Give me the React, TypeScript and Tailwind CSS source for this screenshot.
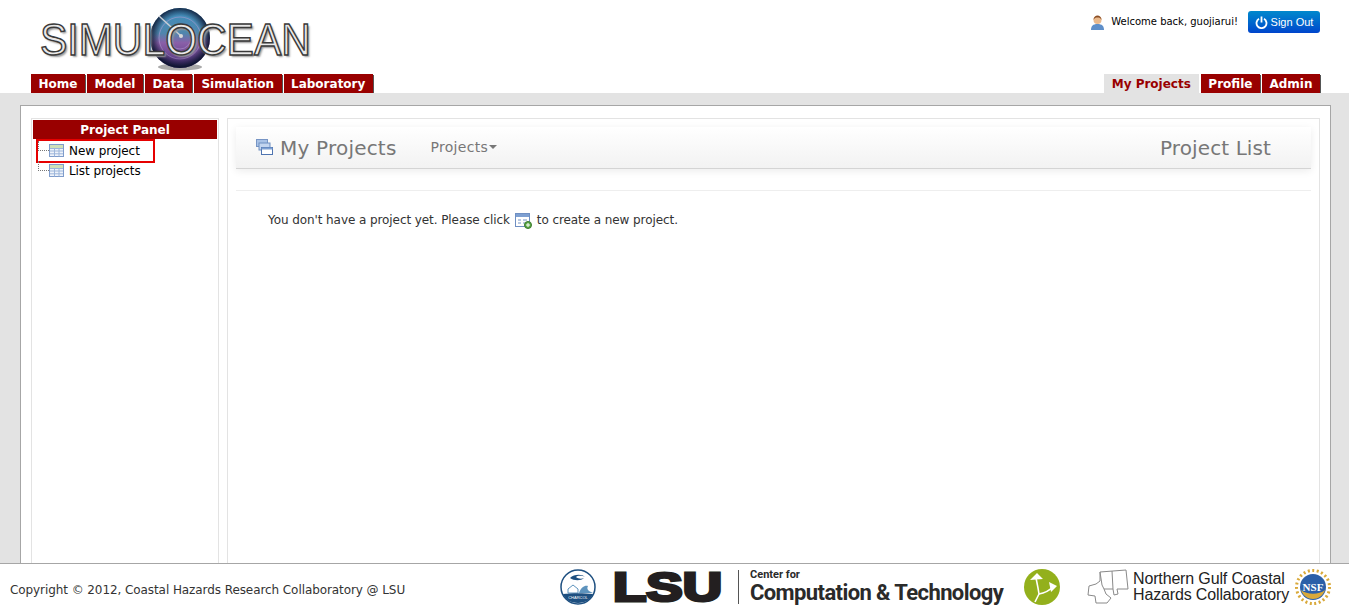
import React from "react";

const dejavu = "font-['DejaVu_Sans',Verdana,sans-serif]";

const Tab = ({ label, active }: { label: string; active?: boolean }) => (
  <a
    className={
      active
        ? "h-[19px] px-[8px] bg-[#e3e3e3] text-[#990000] text-[12px] font-bold leading-[20px]"
        : "h-[19px] px-[7.5px] bg-[#990000] text-white text-[12px] font-bold leading-[20px] shadow-[1px_1px_0_#555]"
    }
  >
    {label}
  </a>
);

const TableIcon = () => (
  <svg width="15" height="14" viewBox="0 0 15 14" className="shrink-0">
    <rect x="0.5" y="0.5" width="14" height="12" fill="#eef3fa" stroke="#7f9ccb" />
    <rect x="1" y="1" width="13" height="3" fill="#cfe0b8" />
    <path d="M1 4.500h13M1 7h13M1 9.800h13M5.500 4v8.500M10 4v8.500" stroke="#9db6da" strokeWidth="1" fill="none" />
  </svg>
);

const TreeRow = ({ label, boxed }: { label: string; boxed?: boolean }) => (
  <div className="relative flex items-center h-[20px] pl-[16px] text-[12px] tracking-[-0.08px] text-black">
    <span className="absolute left-[5px] top-0 h-[10px] w-[11px] border-l border-b border-dotted border-[#777]" />
    <span className="mr-[5px]">
      <TableIcon />
    </span>
    {label}
    {boxed && <span className="absolute left-[3px] top-[-2px] w-[119px] h-[24px] border-2 border-[#e60000]" />}
  </div>
);

const Sphere = () => (
  <svg width="86" height="68" viewBox="0 0 86 68" className="absolute left-[106px] top-[4px]">
    <defs>
      <linearGradient id="body" x1="0" y1="0" x2="0" y2="1">
        <stop offset="0%" stopColor="#3f8fbd" />
        <stop offset="42%" stopColor="#4f86ad" />
        <stop offset="58%" stopColor="#8a5fa8" />
        <stop offset="100%" stopColor="#4b2f78" />
      </linearGradient>
      <radialGradient id="rim" cx="50%" cy="48%" r="50%">
        <stop offset="70%" stopColor="#0d1530" stopOpacity="0" />
        <stop offset="100%" stopColor="#0d1530" stopOpacity="0.95" />
      </radialGradient>
    </defs>
    <ellipse cx="43" cy="63" rx="22" ry="3.500" fill="#555" opacity="0.5" />
    <circle cx="43" cy="34" r="30" fill="url(#body)" />
    <circle cx="43" cy="34" r="21" fill="none" stroke="#b59ad0" strokeWidth="0.8" opacity="0.7" />
    <circle cx="43" cy="34" r="11" fill="none" stroke="#b59ad0" strokeWidth="0.8" opacity="0.7" />
    <circle cx="43" cy="34" r="30" fill="url(#rim)" />
    <path d="M22 12 L44 32" stroke="#c9ced6" strokeWidth="1.500" />
    <circle cx="44" cy="32" r="2" fill="#d8d8d8" />
  </svg>
);

const StackIcon = () => (
  <svg width="17" height="17" viewBox="0 0 17 17" className="shrink-0">
    <rect x="0.500" y="0.500" width="11" height="7" fill="#a9c2e6" stroke="#7795c5" />
    <rect x="3" y="4" width="11" height="7" fill="#c3d5ef" stroke="#6f8fc2" />
    <rect x="5.500" y="8.500" width="11" height="7" fill="#fff" stroke="#4f74b0" />
    <rect x="5.500" y="8.500" width="11" height="2" fill="#7ea0d2" />
  </svg>
);

const NewIcon = () => (
  <svg width="17" height="17" viewBox="0 0 17 17" className="inline-block align-[-5px] mx-[5px]">
    <rect x="0.500" y="1.500" width="14" height="13" fill="#fff" stroke="#6f8fc2" />
    <rect x="1" y="2" width="13" height="3" fill="#7ea0d2" />
    <path d="M3 8h3M8 8h4M3 11h3M8 11h2" stroke="#7795c5" />
    <circle cx="13" cy="13" r="3.500" fill="#5aa845" stroke="#3c7a2e" />
    <path d="M13 11v4M11 13h4" stroke="#fff" />
  </svg>
);

const Charcoal = () => (
  <svg width="36" height="36" viewBox="0 0 36 36" className="shrink-0">
    <circle cx="18" cy="18" r="17" fill="#fff" stroke="#1d4f80" strokeWidth="1.500" />
    <path d="M10 9c4-4 12-4 15-1-4-2-8-1-9 0 2 2 6 2 8 1-3 3-10 3-14 0z" fill="#1d4f80" />
    <path d="M8 20l5-4 5 4v4H8z" fill="none" stroke="#5d93bd" />
    <path d="M19 24c2-6 6-8 9-7-1 2-1 3 1 5l4 2z" fill="#5d93bd" />
    <path d="M3 25c8-1 22-1 30 0-2 5-7 9-15 9S5 30 3 25z" fill="#1d4f80" />
    <text x="18" y="30" textAnchor="middle" fontSize="4" fill="#fff" fontFamily="Liberation Sans">CHARCOL</text>
  </svg>
);

const GreenBadge = () => (
  <svg width="36" height="36" viewBox="0 0 36 36" className="shrink-0">
    <circle cx="18" cy="18" r="18" fill="#93b01c" />
    <path d="M15 25 C14 18 13 14 12 9 M15 25 C22 24 26 21 30 17 M15 25 L11 33" stroke="#fff" strokeWidth="1.600" fill="none" />
    <path d="M6 11 L13 4 L19 10 Z M25 13 L33 17 L27 23 Z" fill="#fff" />
  </svg>
);

const StatesMap = () => (
  <svg width="42" height="36" viewBox="0 0 42 36" className="shrink-0">
    <path
      d="M13 3 L39 1 L41 20 L30 20 L31 25 L27 26 L26 20 L17 20 L19 25 L24 29 L20 34 L9 34 L8 27 L1 26 L2 17 L9 15 L13 12 Z M25 2 L26 20"
      fill="none"
      stroke="#8a8a8a"
      strokeWidth="1"
    />
    <path d="M13 3 L15 16 L17 20" fill="none" stroke="#8a8a8a" />
  </svg>
);

const NsfBadge = () => (
  <svg width="36" height="36" viewBox="0 0 36 36" className="shrink-0">
    <circle cx="18" cy="18" r="16.500" fill="none" stroke="#d9a93a" strokeWidth="3" strokeDasharray="2 2.500" />
    <circle cx="18" cy="18" r="13" fill="#2b5fa8" />
    <path d="M6 21c6 5 18 5 24 0-2 6-7 9-12 9s-10-3-12-9z" fill="#d9a93a" />
    <text x="18" y="22" textAnchor="middle" fontSize="11" fontWeight="bold" fill="#fff" fontFamily="Liberation Serif">NSF</text>
  </svg>
);

export default function App() {
  return (
    <div className={`${dejavu} h-[609px] w-full flex flex-col overflow-hidden bg-white text-[#333]`}>
      <header className="h-[93px] shrink-0 flex justify-between pl-[31px] pr-[29px]">
        <div className="flex flex-col justify-between">
          <div className="relative h-[74px] w-[300px]">
            <Sphere />
            <span className="absolute left-[9px] top-[13px] font-['Liberation_Sans',sans-serif] text-[45px] leading-[54px] text-[#e9e9e9] [-webkit-text-stroke:1.500px_#3a3a3a] scale-x-[0.91] origin-left whitespace-nowrap [text-shadow:2px_2px_2px_#999]">
              SIMULOCEAN
            </span>
          </div>
          <nav className="flex gap-[2px]">
            <Tab label="Home" />
            <Tab label="Model" />
            <Tab label="Data" />
            <Tab label="Simulation" />
            <Tab label="Laboratory" />
          </nav>
        </div>
        <div className="flex flex-col justify-between items-end">
          <div className="flex items-center pt-[11px] text-[10px] text-black">
            <svg width="15" height="15" viewBox="0 0 15 15" className="mr-[6px]">
              <path d="M1 15c0-4 2-6 6.500-6S14 11 14 15z" fill="#5f8fc9" />
              <circle cx="7.500" cy="5" r="4" fill="#eab98c" />
              <path d="M3.500 5c0-3 2-4.500 4-4.500s4 1.500 4 4.500c-1-2-2-2.500-4-2.500S4.500 3 3.500 5z" fill="#8a4f26" />
            </svg>
            <span className="mb-[2px]">Welcome back, guojiarui!</span>
            <button className="ml-[10px] h-[22px] w-[72px] flex items-center justify-center gap-[3px] rounded-[3px] bg-gradient-to-b from-[#0088cc] to-[#0044cc] text-white text-[11px] font-['Liberation_Sans',sans-serif]">
              <svg width="13" height="13" viewBox="0 0 13 13" fill="none" stroke="#fff" strokeWidth="1.800">
                <path d="M4 2.800a5 5 0 1 0 5 0" />
                <path d="M6.500 0.500v6" />
              </svg>
              Sign Out
            </button>
          </div>
          <nav className="flex gap-[2px]">
            <Tab label="My Projects" active />
            <Tab label="Profile" />
            <Tab label="Admin" />
          </nav>
        </div>
      </header>

      <main className="flex-1 min-h-0 bg-[#e3e3e3] pt-[12px] pl-[20px] pr-[18px]">
        <div className="h-full bg-white border border-b-0 border-[#a6a6a6] pt-[12px] pl-[10px] pr-[10px] flex gap-[8px]">
          <aside className="w-[188px] shrink-0 border border-b-0 border-[#e3e3e3] pt-[1px] px-[1px]">
            <div className="h-[19px] bg-[#990000] text-white text-[12px] font-bold leading-[20px] text-center">
              Project Panel
            </div>
            <div className="pt-[2px]">
              <TreeRow label="New project" boxed />
              <TreeRow label="List projects" />
            </div>
          </aside>
          <section className="flex-1 min-w-0 border border-b-0 border-[#e3e3e3] pt-[8px] px-[8px]">
            <div className="h-[42px] flex items-center pl-[20px] pr-[40px] bg-gradient-to-b from-white to-[#f2f2f2] border-b border-[#d4d4d4] shadow-[0_2px_8px_rgba(0,0,0,0.08)]">
              <StackIcon />
              <span className="ml-[7px] text-[20px] tracking-[0.2px] text-[#777]">My Projects</span>
              <span className="ml-[34px] text-[14px] tracking-[0.3px] text-[#777] flex items-center mb-[1px]">
                Projects
                <span className="ml-[1px] border-x-[4px] border-x-transparent border-t-[4px] border-t-[#777]" />
              </span>
              <span className="ml-auto text-[20px] tracking-[0.1px] text-[#777]">Project List</span>
            </div>
            <div className="mt-[21px] border-t border-[#eeeeee] pl-[32px] pt-[21px] text-[12px] tracking-[-0.08px] leading-[17px] text-[#333]">
              You don't have a project yet. Please click
              <NewIcon />
              to create a new project.
            </div>
          </section>
        </div>
      </main>

      <footer className="h-[46px] shrink-0 border-t border-[#a6a6a6] bg-white flex items-center pl-[10px] pr-[18px]">
        <span className="pt-[6px] text-[12px] tracking-[-0.08px] text-[#333]">Copyright © 2012, Coastal Hazards Research Collaboratory @ LSU</span>
        <div className="ml-auto flex items-center">
          <Charcoal />
          <span className="ml-[17px] w-[118px] whitespace-nowrap font-['Liberation_Sans',sans-serif] font-bold text-[41px] leading-[40px] text-[#231f20] scale-x-[1.33] origin-left [-webkit-text-stroke:3px_#231f20]">
            LSU
          </span>
          <span className="ml-[7px] h-[34px] border-l border-[#555]" />
          <div className="ml-[11px] w-[252px] font-['Roboto',sans-serif] font-bold text-[#2a2a2a]">
            <div className="text-[11px] leading-[12px]">Center for</div>
            <div className="text-[22px] leading-[24px] tracking-[-0.6px] whitespace-nowrap">Computation &amp; Technology</div>
          </div>
          <span className="ml-[22px]">
            <GreenBadge />
          </span>
          <span className="ml-[27px]">
            <StatesMap />
          </span>
          <div className="ml-[4px] w-[156px] font-['Liberation_Sans',sans-serif] text-[16px] tracking-[-0.15px] leading-[16px] text-[#222] whitespace-nowrap">
            <div>Northern Gulf Coastal</div>
            <div>Hazards Collaboratory</div>
          </div>
          <span className="ml-[6px]">
            <NsfBadge />
          </span>
        </div>
      </footer>
    </div>
  );
}
